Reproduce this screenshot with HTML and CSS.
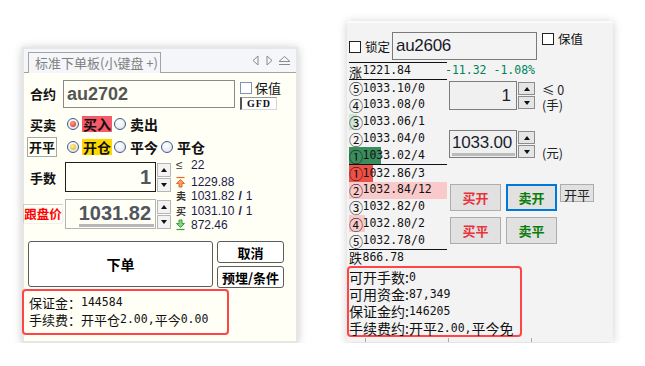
FILE: index.html
```html
<!DOCTYPE html>
<html lang="zh-CN">
<head>
    <meta charset="UTF-8">
    <meta name="viewport" content="width=device-width, initial-scale=1.0">
    <title>下单板</title>
    <link rel="stylesheet" href="styles.css">
</head>
<body>
<div class="page">

    <div class="board">
        <div class="tabbar">
            <div class="tab">标准下单板(小键盘 +)</div>
            <div class="tab-tools">
                <svg width="7" height="11" viewBox="0 0 7 11"><path d="M6 1 L1 5.5 L6 10 Z"/></svg>
                <svg width="7" height="11" viewBox="0 0 7 11"><path d="M1 1 L6 5.5 L1 10 Z"/></svg>
                <svg width="13" height="10" viewBox="0 0 13 10"><path d="M1 5.5 L6.5 0.5 L12 5.5 Z M1 8.5 H12"/></svg>
            </div>
        </div>

        <div class="board-body">
            <div class="row row-code">
                <span class="lbl">合约</span>
                <div class="code-input">au2702</div>
                <div class="hedge">
                    <label class="chk"><span class="chk-box"></span>保值</label>
                    <div class="gfd">GFD</div>
                </div>
            </div>

            <div class="row row-opt">
                <span class="lbl">买卖</span>
                <span class="opt"><span class="radio on red"></span><span class="opt-txt hl-red">买入</span></span>
                <span class="opt"><span class="radio"></span><span class="opt-txt">卖出</span></span>
            </div>

            <div class="row row-opt2">
                <span class="lbl"><span class="lbl-btn">开平</span></span>
                <span class="opt"><span class="radio on yellow"></span><span class="opt-txt hl-yellow">开仓</span></span>
                <span class="opt"><span class="radio"></span><span class="opt-txt">平今</span></span>
                <span class="opt"><span class="radio"></span><span class="opt-txt">平仓</span></span>
            </div>

            <div class="qp">
                <div class="qp-left">
                    <div class="row row-qty">
                        <span class="lbl">手数</span>
                        <div class="num-input dark"><span>1</span></div>
                        <div class="spin"><span class="up"></span><span class="down"></span></div>
                    </div>
                    <div class="row row-price">
                        <span class="lbl-box">跟盘价</span>
                        <div class="num-input bottom"><span class="price">1031.82</span></div>
                        <div class="spin"><span class="up"></span><span class="down"></span></div>
                    </div>
                </div>
                <ul class="quote">
                    <li><i class="q-ic">≤</i>22</li>
                    <li>
                        <i class="q-ic"><svg width="9" height="12" viewBox="0 0 9 12"><path d="M0.5 1.5 H8.5" stroke="#e8681e" stroke-width="1.2"/><path d="M4.5 3.5 L8.5 7.5 L6 7.5 L6 11 L3 11 L3 7.5 L0.5 7.5 Z" fill="#f5a070" stroke="#e8681e"/></svg></i>1229.88
                    </li>
                    <li><i class="q-ic cn">卖</i>1031.82 <b class="sl">/</b> 1</li>
                    <li><i class="q-ic cn">买</i>1031.10 <b class="sl">/</b> 1</li>
                    <li>
                        <i class="q-ic"><svg width="9" height="12" viewBox="0 0 9 12"><path d="M4.5 8.5 L8.5 4.5 L6 4.5 L6 1 L3 1 L3 4.5 L0.5 4.5 Z" fill="#8ed08e" stroke="#36a036"/><path d="M0.5 10.5 H8.5" stroke="#36a036" stroke-width="1.2"/></svg></i>872.46
                    </li>
                </ul>
            </div>

            <div class="actions">
                <button class="btn-main">下单</button>
                <div class="btn-side">
                    <button class="btn-sm">取消</button>
                    <button class="btn-sm">预埋/条件</button>
                </div>
            </div>

            <div class="note note-l">
                <div>保证金：<span class="num">144584</span></div>
                <div>手续费：开平仓<span class="num">2.00,</span>平今<span class="num">0.00</span></div>
            </div>
        </div>
    </div>

    <div class="ticket">
        <div class="t-head">
            <label class="t-chk lock"><span class="chk-box"></span>锁定</label>
            <div class="t-code">au2606</div>
            <label class="t-chk keep"><span class="chk-box"></span>保值</label>
        </div>

        <div class="t-main">
            <div class="book">
                <div class="b-line"></div>
                <div class="b-row limit"><span class="cn">涨</span>1221.84</div>
                <div class="b-line"></div>
                <div class="b-row"><span class="lv">⑤</span>1033.10/0</div>
                <div class="b-row"><span class="lv">④</span>1033.08/0</div>
                <div class="b-row bar-lg" style="--w:8px"><span class="lv">③</span>1033.06/1</div>
                <div class="b-row"><span class="lv">②</span>1033.04/0</div>
                <div class="b-row bar-dg" style="--w:32px"><span class="lv">①</span>1033.02/4</div>
                <div class="b-line"></div>
                <div class="b-row bar-r" style="--w:24px"><span class="lv">①</span>1032.86/3</div>
                <div class="b-row bar-p" style="--w:98px"><span class="lv">②</span>1032.84/12</div>
                <div class="b-row"><span class="lv">③</span>1032.82/0</div>
                <div class="b-row bar-p" style="--w:16px"><span class="lv">④</span>1032.80/2</div>
                <div class="b-row"><span class="lv">⑤</span>1032.78/0</div>
                <div class="b-line"></div>
                <div class="b-row limit"><span class="cn">跌</span>866.78</div>
            </div>

            <div class="t-side">
                <div class="chg">-11.32 -1.08%</div>
                <div class="t-field">
                    <div class="t-input"><span>1</span></div>
                    <div class="t-spin"><span class="up"></span><span class="down"></span></div>
                    <div class="unit"><div>≤ 0</div><div>(手)</div></div>
                </div>
                <div class="t-field t-price">
                    <div class="t-input"><span class="price-val">1033.00</span></div>
                    <div class="t-spin"><span class="up"></span><span class="down"></span></div>
                    <div class="unit unit-bottom">(元)</div>
                </div>
                <div class="t-btns">
                    <div class="t-btn-row">
                        <button class="tb buy">买开</button>
                        <button class="tb sell focus">卖开</button>
                        <button class="tb plain">开平</button>
                    </div>
                    <div class="t-btn-row">
                        <button class="tb buy">买平</button>
                        <button class="tb sell">卖平</button>
                    </div>
                </div>
            </div>
        </div>

        <div class="note note-r">
            <div>可开手数:<span class="num">0</span></div>
            <div>可用资金:<span class="num">87,349</span></div>
            <div>保证金约:<span class="num">146205</span></div>
            <div>手续费约:开平<span class="num">2.00,</span>平今免</div>
        </div>
        <div class="t-foot"><span></span><span></span><span></span></div>
    </div>

</div>
</body>
</html>
```

FILE: styles.css
```css
* {
    box-sizing: border-box;
}

body {
    margin: 0;
    background: #fff;
    font-family: "Noto Sans CJK SC", sans-serif;
    color: #111;
}

.page {
    display: flex;
    align-items: flex-start;
    padding-left: 22px;
}

button {
    font-family: "Noto Sans CJK SC", sans-serif;
    padding: 0;
    cursor: pointer;
}

/* shared bits */
.chk-box {
    flex: none;
    width: 12px;
    height: 12px;
    border: 1px solid #7b95b5;
    background: #fff;
}

.num {
    font-family: "DejaVu Sans Mono", monospace;
    font-size: 11.5px;
    line-height: 1;
}

.note {
    border: 2px solid #ff4545;
    border-radius: 4px;
    white-space: nowrap;
}

.note div {
    display: flex;
    align-items: center;
}

.up::after,
.down::after {
    content: "";
    border-left: 3.5px solid transparent;
    border-right: 3.5px solid transparent;
}

.up::after {
    border-bottom: 4px solid #111;
}

.down::after {
    border-top: 4px solid #111;
}

/* left board */
.board {
    margin-top: 47px;
    width: 276px;
    height: 296px;
    border: 2px solid #e6e6e6;
    background: #fffff6;
    box-shadow: 0 1px 9px rgba(0, 0, 0, 0.22);
}

.tabbar {
    display: flex;
    align-items: flex-end;
    height: 24px;
    padding: 0 5px 0 4px;
    background: #f4f6f9;
    border-bottom: 1px solid #a3a3a3;
}

.tab {
    width: 133px;
    height: 21px;
    margin-bottom: -1px;
    padding: 0 6px;
    border: 1px solid #a3a3a3;
    border-bottom: none;
    background: #f4f6f9;
    color: #808080;
    font-size: 13px;
    line-height: 19px;
    white-space: nowrap;
}

.tab-tools {
    margin-left: auto;
    align-self: center;
    display: flex;
    align-items: center;
    gap: 7px;
}

.tab-tools svg:last-child {
    margin-left: -2px;
}

.tab-tools path {
    fill: none;
    stroke: #8a8a8a;
}

.board-body {
    padding: 7px 0 0 6px;
}

.row {
    display: flex;
    align-items: center;
}

.lbl {
    flex: none;
    font-size: 13px;
    font-weight: 700;
}

.row-code {
    height: 28px;
    align-items: flex-start;
}

.row-code .lbl {
    width: 33px;
    line-height: 28px;
}

.code-input {
    width: 172px;
    height: 28px;
    border: 1px solid #8a8a8a;
    padding-left: 3px;
    font: bold 18px/26px "Liberation Sans", sans-serif;
    color: #555;
}

.hedge {
    margin-left: 5px;
    padding-top: 2px;
}

.chk {
    display: flex;
    align-items: center;
    gap: 3px;
    height: 12px;
    font-size: 13px;
    line-height: 12px;
}

.gfd {
    margin-top: 3px;
    width: 37px;
    height: 13px;
    border: 1px solid #d6d6d6;
    border-top-color: #999;
    border-left: 2px solid #555;
    background: #fff;
    font: bold 10px/11px "Liberation Serif", serif;
    text-align: center;
    letter-spacing: 1px;
}

.row-opt {
    margin-top: 8px;
    height: 16px;
}

.row-opt .lbl,
.row-opt2 .lbl {
    width: 37px;
}

.row-opt2 {
    margin-top: 5px;
    height: 20px;
}

.lbl-btn {
    display: block;
    margin-left: -3px;
    width: 30px;
    height: 20px;
    border: 1px solid #a8a8a8;
    line-height: 18px;
    text-align: center;
}

.opt {
    display: flex;
    align-items: center;
    gap: 3px;
    margin-right: 2px;
}

.radio {
    position: relative;
    flex: none;
    width: 12px;
    height: 12px;
    border-radius: 50%;
    border: 1px solid #3e5c86;
    background: radial-gradient(circle at 40% 35%, #fff 0, #e6eaf1 65%, #c4ccd8 100%);
}

.radio.on::after {
    content: "";
    position: absolute;
    left: 2px;
    top: 2px;
    width: 6px;
    height: 6px;
    border-radius: 50%;
}

.radio.red::after {
    background: radial-gradient(circle at 40% 35%, #ffa090, #e41e18);
}

.radio.yellow::after {
    background: radial-gradient(circle at 40% 35%, #fff2a0, #dcae00);
}

.opt-txt {
    padding: 0 1px;
    font-size: 14px;
    font-weight: 700;
    line-height: 16px;
}

.hl-red {
    background: #f7586a;
}

.hl-yellow {
    background: #ffd800;
}

.qp {
    display: flex;
    margin-top: 5px;
}

.row-qty {
    height: 30px;
}

.row-qty .lbl {
    width: 35px;
}

.num-input {
    display: flex;
    align-items: center;
    justify-content: flex-end;
    width: 91px;
    height: 30px;
    padding-right: 4px;
    border: 1px solid #b4b4b4;
    font: bold 20px "Liberation Sans", sans-serif;
    color: #505560;
}

.num-input.dark {
    border-color: #1e1e1e;
}

.num-input.bottom {
    align-items: flex-end;
    padding-right: 1px;
}

.price {
    padding-right: 3px;
    margin-bottom: 1px;
    line-height: 21px;
    border-bottom: 3px solid #b8b8b8;
}

.row-price {
    margin-top: 7px;
    height: 30px;
}

.lbl-box {
    flex: none;
    margin: 0 2px 0 -7px;
    width: 40px;
    height: 20px;
    border: 1px solid #cfcfcf;
    border-right-color: #f2f2ea;
    border-bottom-color: #f2f2ea;
    color: #f00;
    font-size: 12.5px;
    font-weight: 700;
    line-height: 18px;
    text-align: center;
}

.spin {
    display: flex;
    flex-direction: column;
    gap: 1px;
    margin-left: 1px;
    width: 14px;
    height: 30px;
    padding-top: 1px;
}

.spin span,
.t-spin span {
    display: flex;
    align-items: center;
    justify-content: center;
    height: 14px;
    border: 1px solid #b5b5b5;
    background: #f3f3f3;
}

.quote {
    list-style: none;
    margin: -4px 0 0 4px;
    padding: 0;
    font: 12px/1 "Liberation Sans", sans-serif;
    color: #1c1c4a;
}

.quote li {
    display: flex;
    align-items: center;
    height: 14.3px;
    white-space: nowrap;
}

.quote li:first-child {
    height: 14px;
    margin-bottom: 3px;
}

.sl {
    margin: 0 4px;
    font-weight: 700;
}

.q-ic {
    flex: none;
    display: flex;
    width: 16px;
    padding-left: 1px;
    font-style: normal;
    color: #333;
}

.q-ic.cn {
    font-family: "Noto Sans CJK SC", sans-serif;
    font-size: 10px;
    font-weight: 700;
}

.actions {
    display: flex;
    margin: 9px 0 0 -2px;
}

.btn-main {
    width: 185px;
    height: 46px;
    border: 1px solid #5c5c5c;
    border-radius: 3px;
    background: #fff;
    font-size: 14px;
    font-weight: 700;
}

.btn-side {
    display: flex;
    flex-direction: column;
    gap: 3px;
    margin-left: 4px;
}

.btn-sm {
    width: 67px;
    height: 22px;
    border: 1px solid #5c5c5c;
    border-radius: 3px;
    background: #fff;
    font-size: 13px;
    font-weight: 700;
}

.note-l {
    margin: 1px 0 0 -8px;
    width: 207px;
    height: 46px;
    padding: 3px 0 0 5px;
    font-size: 13px;
}

.note-l div {
    height: 17px;
}

/* right ticket */
.ticket {
    margin: 21px 0 0 49px;
    width: 266px;
    height: 321px;
    padding: 9px 0 0 2px;
    border-top: 2px solid #fbfbfb;
    background: #f3f3f3;
    box-shadow: 0 1px 9px rgba(0, 0, 0, 0.2);
}

.t-head {
    display: flex;
    align-items: flex-start;
    height: 28px;
}

.t-chk {
    display: flex;
    align-items: center;
    gap: 4px;
    height: 12px;
    font-size: 12.5px;
    line-height: 12px;
}

.t-chk .chk-box {
    border-color: #222;
}

.t-chk.lock {
    margin-top: 9px;
}

.t-chk.keep {
    margin: 1px 0 0 5px;
}

.t-code {
    margin-left: 2px;
    width: 145px;
    height: 28px;
    padding-left: 3px;
    border: 1px solid #7a7a7a;
    font: 17px/25px "Liberation Sans", sans-serif;
    letter-spacing: -0.3px;
    color: #1a1a2a;
}

.t-main {
    display: flex;
    margin-top: 2px;
}

.book {
    width: 98px;
    font-family: "DejaVu Sans Mono", monospace;
    font-size: 11.5px;
    line-height: 1;
}

.b-line {
    height: 1px;
    background: #111;
}

.b-row {
    display: flex;
    align-items: center;
    height: 16.8px;
    white-space: nowrap;
    background: linear-gradient(90deg, var(--bar, transparent) var(--w, 0), transparent 0);
}

.b-row.limit {
    height: 16px;
}

.bar-lg {
    --bar: #cde8d6;
}

.bar-dg {
    --bar: #3a8d5c;
}

.bar-r {
    --bar: #ee5048;
}

.bar-p {
    --bar: #fac9c9;
}

.lv,
.b-row .cn {
    flex: none;
    width: 13.5px;
    font-family: "Noto Sans CJK SC", sans-serif;
    font-size: 13px;
    line-height: 1;
}

.lv {
    font-size: 14px;
}

.chg {
    height: 17px;
    margin-left: -2px;
    font: 11.5px/17px "DejaVu Sans Mono", monospace;
    color: #00835a;
    white-space: nowrap;
}

.t-field {
    display: flex;
    height: 29px;
    margin: 2px 0 0 2px;
}

.t-input {
    display: flex;
    align-items: center;
    justify-content: flex-end;
    width: 68px;
    padding-right: 5px;
    border: 1px solid #7d7d7d;
    background: #f0f0f0;
    font: 17px "Liberation Sans", sans-serif;
    color: #1d1d2d;
}

.t-spin {
    display: flex;
    flex-direction: column;
    gap: 1px;
    width: 17px;
    margin-left: 1px;
    padding-top: 1px;
}

.t-spin span {
    height: 13px;
    border-color: #8c8c8c;
    background: #e5e5e5;
}

.unit {
    margin-left: 7px;
    padding-top: 1px;
    font-size: 12.5px;
    line-height: 15px;
    color: #222;
    white-space: nowrap;
}

.t-price {
    height: 28px;
    margin-top: 20px;
}

.t-price .t-input {
    align-items: flex-end;
    padding-right: 1px;
}

.price-val {
    padding-right: 3px;
    margin-bottom: 1px;
    line-height: 20px;
    border-bottom: 3px solid #bcbcbc;
    letter-spacing: -0.2px;
}

.unit-bottom {
    align-self: flex-end;
    margin-bottom: -2px;
}

.t-btns {
    margin: 26px 0 0 3px;
}

.t-btn-row {
    display: flex;
    align-items: flex-start;
    gap: 5px;
}

.t-btn-row + .t-btn-row {
    margin-top: 6px;
}

.tb {
    width: 51px;
    height: 27px;
    border: 1px solid #adadad;
    background: #e1e1e1;
    font-size: 13px;
    font-weight: 700;
}

.tb.buy {
    color: #e8333a;
}

.tb.sell {
    color: #0a7d0a;
}

.tb.focus {
    border: 2px solid #0078d7;
}

.tb.plain {
    width: 34px;
    height: 18px;
    margin-left: -2px;
    font-weight: 400;
    color: #222;
}

.note-r {
    margin-left: -2px;
    width: 175px;
    height: 71px;
    padding-top: 1px;
    font-size: 14px;
}

.note-r div {
    height: 17px;
}

.t-foot {
    display: flex;
    gap: 82px;
    margin-top: 1px;
    padding-left: 16px;
}

.t-foot span {
    width: 1px;
    height: 4px;
    background: #aaa;
}
```
